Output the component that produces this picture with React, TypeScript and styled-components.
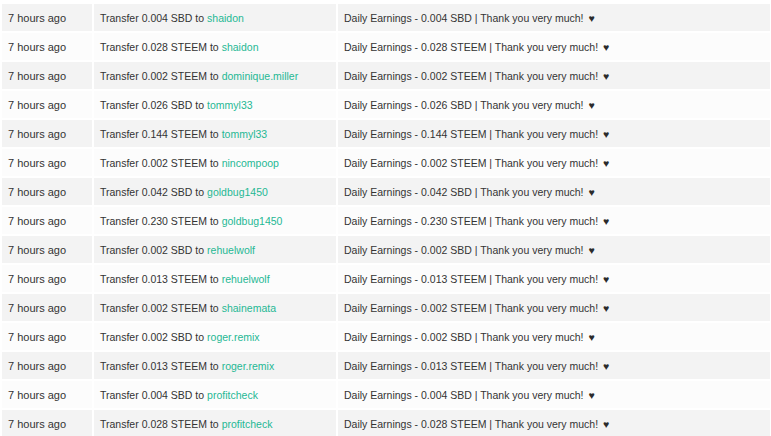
import React from "react";
import styled, { createGlobalStyle } from "styled-components";

const Global = createGlobalStyle`
  html, body { margin: 0; padding: 0; background: #ffffff; }
  body { font-family: "Liberation Sans", Arial, sans-serif; }
`;

const Table = styled.div`
  display: flex;
  flex-direction: column;
  gap: 2px;
  padding: 4px 1px 0 2px;
  width: 768px;
`;

const Row = styled.div<{ $alt: boolean }>`
  display: grid;
  grid-template-columns: 90px 242px 1fr;
  column-gap: 2px;
  height: 27px;
  & > div { background: ${(p) => (p.$alt ? "#f3f3f3" : "#fcfcfc")}; }
`;

const Cell = styled.div<{ $size?: number }>`
  display: flex;
  align-items: center;
  padding: 0 6px;
  font-size: ${(p) => p.$size ?? 10.5}px;
  color: #333333;
  white-space: nowrap;
  overflow: hidden;
`;

const User = styled.a`
  color: #1fb894;
  text-decoration: none;
  margin-left: 3px;
`;

const Heart = styled.span`
  margin-left: 5px;
  color: #2b2b2b;
`;

type Tx = { amt: string; cur: string; user: string };

const rows: Tx[] = [
  { amt: "0.004", cur: "SBD", user: "shaidon" },
  { amt: "0.028", cur: "STEEM", user: "shaidon" },
  { amt: "0.002", cur: "STEEM", user: "dominique.miller" },
  { amt: "0.026", cur: "SBD", user: "tommyl33" },
  { amt: "0.144", cur: "STEEM", user: "tommyl33" },
  { amt: "0.002", cur: "STEEM", user: "nincompoop" },
  { amt: "0.042", cur: "SBD", user: "goldbug1450" },
  { amt: "0.230", cur: "STEEM", user: "goldbug1450" },
  { amt: "0.002", cur: "SBD", user: "rehuelwolf" },
  { amt: "0.013", cur: "STEEM", user: "rehuelwolf" },
  { amt: "0.002", cur: "STEEM", user: "shainemata" },
  { amt: "0.002", cur: "SBD", user: "roger.remix" },
  { amt: "0.013", cur: "STEEM", user: "roger.remix" },
  { amt: "0.004", cur: "SBD", user: "profitcheck" },
  { amt: "0.028", cur: "STEEM", user: "profitcheck" },
];

export default function App() {
  return (
    <>
      <Global />
      <Table>
        {rows.map((r, i) => (
          <Row key={i} $alt={i % 2 === 0}>
            <Cell $size={11}>7 hours ago</Cell>
            <Cell>
              Transfer {r.amt} {r.cur} to<User href="#">{r.user}</User>
            </Cell>
            <Cell>
              Daily Earnings - {r.amt} {r.cur} | Thank you very much!<Heart>♥</Heart>
            </Cell>
          </Row>
        ))}
      </Table>
    </>
  );
}
